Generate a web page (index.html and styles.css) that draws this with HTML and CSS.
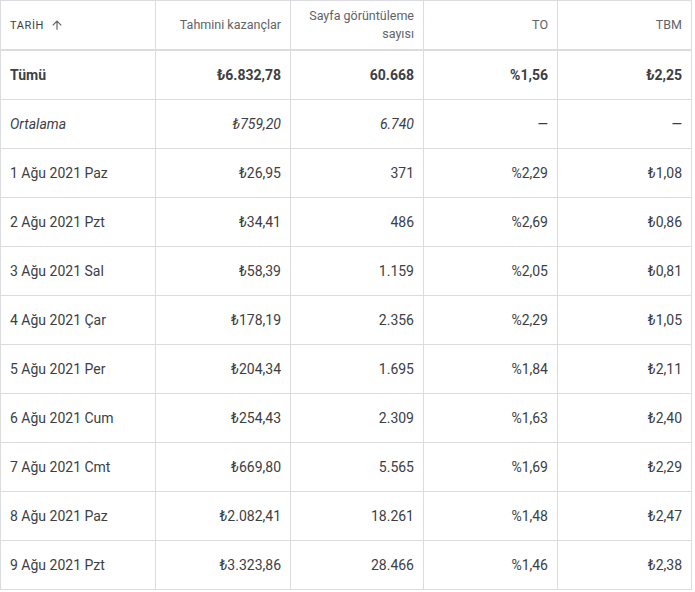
FILE: index.html
```html
<!DOCTYPE html>
<html lang="tr">
<head>
<meta charset="utf-8">
<link rel="stylesheet" href="styles.css">
</head>
<body>
<table class="report">
  <colgroup>
    <col class="c1"><col class="c2"><col class="c3"><col class="c4"><col class="c5">
  </colgroup>
  <thead>
    <tr>
      <th class="date-head"><span class="sort-label">Tarih</span><svg class="sort-icon" viewBox="0 0 24 24" width="14" height="14"><path d="M4 12l1.41 1.41L11 7.83V20h2V7.83l5.58 5.59L20 12l-8-8-8 8z" fill="#5f6368"/></svg></th>
      <th>Tahmini kazançlar</th>
      <th>Sayfa görüntüleme<br>sayısı</th>
      <th>TO</th>
      <th>TBM</th>
    </tr>
  </thead>
  <tbody>
    <tr class="total">
      <td>Tümü</td><td>₺6.832,78</td><td>60.668</td><td>%1,56</td><td>₺2,25</td>
    </tr>
    <tr class="avg">
      <td>Ortalama</td><td>₺759,20</td><td>6.740</td><td>—</td><td>—</td>
    </tr>
    <tr><td>1 Ağu 2021 Paz</td><td>₺26,95</td><td>371</td><td>%2,29</td><td>₺1,08</td></tr>
    <tr><td>2 Ağu 2021 Pzt</td><td>₺34,41</td><td>486</td><td>%2,69</td><td>₺0,86</td></tr>
    <tr><td>3 Ağu 2021 Sal</td><td>₺58,39</td><td>1.159</td><td>%2,05</td><td>₺0,81</td></tr>
    <tr><td>4 Ağu 2021 Çar</td><td>₺178,19</td><td>2.356</td><td>%2,29</td><td>₺1,05</td></tr>
    <tr><td>5 Ağu 2021 Per</td><td>₺204,34</td><td>1.695</td><td>%1,84</td><td>₺2,11</td></tr>
    <tr><td>6 Ağu 2021 Cum</td><td>₺254,43</td><td>2.309</td><td>%1,63</td><td>₺2,40</td></tr>
    <tr><td>7 Ağu 2021 Cmt</td><td>₺669,80</td><td>5.565</td><td>%1,69</td><td>₺2,29</td></tr>
    <tr><td>8 Ağu 2021 Paz</td><td>₺2.082,41</td><td>18.261</td><td>%1,48</td><td>₺2,47</td></tr>
    <tr><td>9 Ağu 2021 Pzt</td><td>₺3.323,86</td><td>28.466</td><td>%1,46</td><td>₺2,38</td></tr>
  </tbody>
</table>
</body>
</html>
```
FILE: styles.css
```css
html, body {
  margin: 0;
  padding: 0;
  background: #ffffff;
}
body {
  font-family: Roboto, "Liberation Sans", Arial, sans-serif;
  color: #3c4043;
}
.report {
  border-collapse: separate;
  border-spacing: 0;
  table-layout: fixed;
  width: 692px;
  border-top: 1px solid #dadce0;
  border-left: 1px solid #dadce0;
}
.c1 { width: 155px; }
.c2 { width: 135px; }
.c3 { width: 133px; }
.c4 { width: 134px; }
.c5 { width: 134px; }
.report th,
.report td {
  box-sizing: border-box;
  padding: 0 9px 0 9px;
  border-right: 1px solid #dadce0;
  border-bottom: 1px solid #dadce0;
  text-align: right;
  vertical-align: middle;
  white-space: nowrap;
}
.report th {
  height: 50px;
  border-bottom: 2px solid #dadce0;
  font-size: 12.5px;
  font-weight: 400;
  line-height: 18px;
  color: #5f6368;
}
.report td {
  height: 49px;
  font-size: 14px;
  line-height: 18px;
}
.report th:first-child,
.report td:first-child {
  text-align: left;
}
.date-head {
  padding-top: 1px;
}
.sort-label {
  font-size: 11px;
  letter-spacing: 0.6px;
  text-transform: uppercase;
  color: #3c4043;
  vertical-align: middle;
}
.sort-icon {
  margin-left: 6px;
  vertical-align: middle;
}
.total td {
  font-weight: 700;
  color: #3c4043;
}
.avg td {
  font-style: italic;
  color: #3c4043;
}
```
